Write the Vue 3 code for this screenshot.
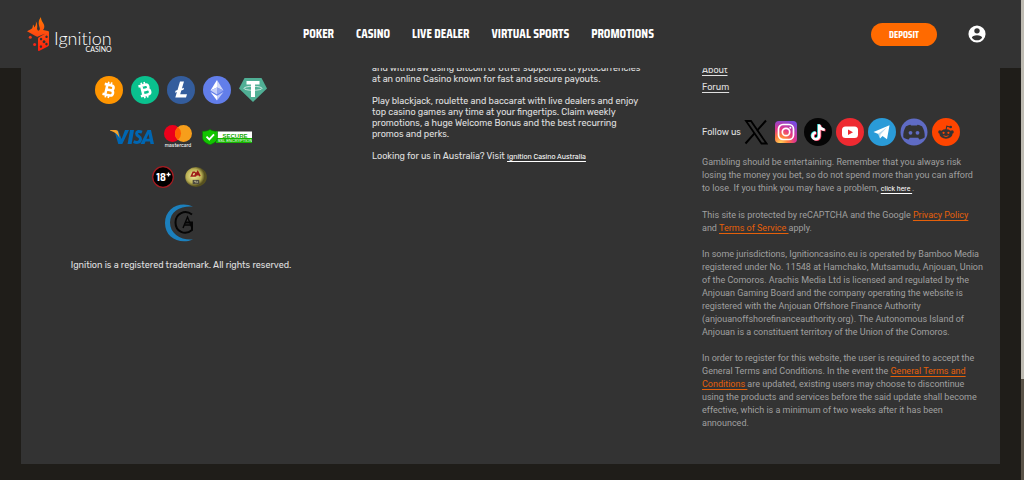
<template>
  <div class="page">
    <header class="header">
      <a href="#" class="brand" aria-label="Ignition Casino">
        <svg class="brand-mark" viewBox="0 0 22 34">
          <defs>
            <linearGradient id="flame" x1="0" y1="0" x2="0" y2="1">
              <stop offset="0" stop-color="#ff7a00" />
              <stop offset="0.5" stop-color="#ff4a10" />
              <stop offset="1" stop-color="#ff1d0c" />
            </linearGradient>
          </defs>
          <path
            fill="url(#flame)"
            fill-rule="evenodd"
            d="M14 0C13.600 4 17.300 6.500 17.300 9.500C17.300 11 16.800 12 16 13L21 14C22 14.300 22 15 22 16V27.500C22 28.500 21.500 29 20.800 29.400L12.500 33.700C11.500 34.200 11 34 11 33V22C11 21 11.500 20.500 12.300 20L18.500 16.400L11 19.500C10.300 19.800 9.700 19.700 9 19.300L0 14.200L4.300 12C5.800 11 5.700 9.500 6 7.500C7 8.500 7.200 9.500 7.200 10.500C8.800 9 9.300 6.500 8.800 4.500C10.300 6.500 10.500 9 10 11.500C10.200 13 11 14 12 13.500C14 12 11.800 9.500 11.700 6.500C11.600 3.500 12.800 1.500 14 0ZM17 23.300a1.400 1.500 0 1 0 .1 0ZM19.500 18.500a1.200 1.300 0 1 0 .1 0ZM14 20.800a1.200 1.300 0 1 0 .1 0ZM19.400 25.800a1.200 1.300 0 1 0 .1 0ZM13.900 28.300a1.200 1.300 0 1 0 .1 0Z"
          />
          <circle cx="3.300" cy="20.300" r="1.500" fill="#f23a18" />
          <circle cx="7.600" cy="27.500" r="1.500" fill="#f2281a" />
        </svg>
        <span class="brand-text">
          <span class="brand-name">Ignition</span>
          <span class="brand-sub">CASINO</span>
        </span>
      </a>
      <nav class="nav">
        <a v-for="item in menu" :key="item" href="#">{{ item }}</a>
      </nav>
      <div class="actions">
        <button type="button" class="deposit">DEPOSIT</button>
        <button type="button" class="account" aria-label="Account">
          <svg viewBox="0 0 20 20">
            <circle cx="10" cy="10" r="9.500" fill="#fff" />
            <circle cx="10" cy="6.500" r="3" fill="#333" />
            <path fill="#333" d="M10 11.400c3 0 5.700 1 5.700 2.700c-1.200 1.800-3.400 2.900-5.700 2.900s-4.500-1.100-5.700-2.900c0-1.700 2.700-2.700 5.700-2.700Z" />
          </svg>
        </button>
      </div>
    </header>

    <footer class="panel">
      <section class="payments">
        <div class="coins">
          <svg viewBox="0 0 28 28">
            <circle cx="14" cy="14" r="14" fill="#ff9500" />
            <g transform="rotate(13 14 14)" fill="none" stroke="#fff">
              <path stroke-width="2.600" d="M8.500 9H15.500a2.400 2.400 0 0 1 0 4.900H11H16a2.600 2.600 0 0 1 0 5.200H8.500M11.300 9V19" />
              <path stroke-width="1.700" d="M12 6V9M15 6V9M12 19V22M15 19V22" />
            </g>
          </svg>
          <svg viewBox="0 0 28 28">
            <circle cx="14" cy="14" r="14" fill="#0ac18e" />
            <g transform="rotate(-14 14 14)" fill="none" stroke="#fff">
              <path stroke-width="2.600" d="M8.500 9H15.500a2.400 2.400 0 0 1 0 4.900H11H16a2.600 2.600 0 0 1 0 5.200H8.500M11.300 9V19" />
              <path stroke-width="1.700" d="M12 6V9M15 6V9M12 19V22M15 19V22" />
            </g>
          </svg>
          <svg viewBox="0 0 28 28">
            <circle cx="14" cy="14" r="14" fill="#345d9d" />
            <path fill="#fff" d="M13 5.500H17L14.900 12.400L17 11.700L16.500 13.700L14.300 14.500L13.200 18.200H20L19 21.500H8.300L9.900 16.100L8 16.800L8.600 14.800L10.500 14Z" />
          </svg>
          <svg viewBox="0 0 28 28">
            <circle cx="14" cy="14" r="14" fill="#627eea" />
            <path fill="#fff" d="M14 4L7.500 14.500L14 11.500Z" />
            <path fill="#d0d8f9" d="M14 4L20.500 14.500L14 11.500Z" />
            <path fill="#c5cff8" d="M14 11.500L7.500 14.500L14 18.400Z" />
            <path fill="#8fa2f0" d="M14 11.500L20.500 14.500L14 18.400Z" />
            <path fill="#fff" d="M7.500 16L14 24.500V19.800Z" />
            <path fill="#c0cbf8" d="M20.500 16L14 24.500V19.800Z" />
          </svg>
          <svg viewBox="0 0 28 28">
            <path fill="#50af95" d="M5.500 2H22.500L28 12.500L14 26L0 12.500Z" />
            <path fill="#fff" d="M7.500 5H20.500V8.500H16V21H12V8.500H7.500Z" />
            <ellipse cx="14" cy="12.300" rx="9" ry="2" fill="none" stroke="#fff" stroke-width="0.700" />
          </svg>
        </div>

        <div class="cards">
          <svg class="visa" viewBox="0 0 44 16">
            <path fill="#0066b2" d="M5 4L8 1L11.600 10L15 1H19L12.300 15H8.300Z" />
            <path fill="#f7a32b" d="M0 1H5.500C7.500 1 8 2 8.300 3.500L9.600 9C7.500 5 4.500 3 0 1.500Z" />
            <path fill="#0066b2" d="M20 1H24L21.600 15H17.600Z" />
            <path fill="none" stroke="#0066b2" stroke-width="3" d="M32 3.200C29 2 26.700 2.300 26.600 4.600C26.500 7.400 30.700 7.200 30.500 10.200C30.300 13.300 27.500 14.200 23.600 12.600" />
            <path fill="#0066b2" fill-rule="evenodd" d="M37.500 1H41L44 15H40.500L40 12.500H35.500L34.500 15H30.500ZM38.500 5L36.500 9.700H39.500Z" />
          </svg>
          <svg class="mastercard" viewBox="0 0 28 23">
            <circle cx="8.500" cy="8.500" r="8.500" fill="#eb001b" />
            <circle cx="19.500" cy="8.500" r="8.500" fill="#f79e1b" />
            <path fill="#ff5f00" d="M14 2A8.500 8.500 0 0 1 14 15A8.500 8.500 0 0 1 14 2Z" />
            <text x="14" y="22" text-anchor="middle" fill="#fff" font-size="5">mastercard</text>
          </svg>
          <svg class="secure" viewBox="0 0 50 16">
            <path fill="#fff" d="M14 2.500H50V9H14Z" />
            <path fill="#16b800" d="M14 9H50V14H14Z" />
            <path fill="#12c400" stroke="#087800" stroke-width="0.600" d="M8 .4C10.500 2 13 2.200 15.500 2.300V8.500C15.500 12 12 14.500 8 15.700C4 14.500 .5 12 .5 8.500V2.300C3 2.200 5.500 2 8 .4Z" />
            <path fill="none" stroke="#fff" stroke-width="1.800" d="M4.500 7.600L7.300 10.400L12 5.300" />
            <text class="seal" x="33" y="8.500" text-anchor="middle" fill="#16a800" font-size="6" font-weight="700">SECURE</text>
            <text class="seal" x="33" y="13" text-anchor="middle" fill="#fff" font-size="4">SSL ENCRYPTION</text>
          </svg>
        </div>

        <div class="badges">
          <svg viewBox="0 0 22 22">
            <circle cx="11" cy="11" r="10.300" fill="#000" stroke="#a51c22" stroke-width="1.200" />
            <text class="age" x="9" y="15" text-anchor="middle" fill="#fff" font-size="12" font-weight="700">18</text>
            <path stroke="#fff" stroke-width="1.300" d="M14.500 8.500H18.500M16.500 6.500V10.500" />
          </svg>
          <svg viewBox="0 0 23 22">
            <defs>
              <radialGradient id="gold" cx="0.400" cy="0.450">
                <stop offset="0" stop-color="#f0eb9c" />
                <stop offset="0.700" stop-color="#b9af54" />
                <stop offset="1" stop-color="#57511f" />
              </radialGradient>
            </defs>
            <ellipse cx="11.500" cy="11" rx="11.300" ry="10.500" fill="url(#gold)" />
            <path fill="none" stroke="#9e1a18" stroke-width="1.600" d="M10.500 6H8.500L6.700 10H10.500L11.500 6L10.500 10M11 10L13.300 5.500L15.700 10M12 8.600H15" />
            <path fill="#4e4b3f" d="M8 14H15V18.500H8Z" />
            <path stroke="#b7b393" d="M9.500 15.500H11.500V17.500M13 15.500V17" fill="none" />
          </svg>
        </div>

        <svg class="regulator" viewBox="0 0 32 38">
          <path fill="#1c80bd" d="M28 2.500C15-3.500 0 4 0 19S15 41 28 35.500C16 36.500 5 30 5 18.500S16 1.500 28 2.500Z" />
          <g fill="none" stroke="#050505" stroke-width="2">
            <path d="M27 10.500C20 5 10.500 9.500 10.500 18.500S20 32 27 26V18.500H20" />
            <path stroke-width="1.400" d="M18 24L22.500 13L27 24M19.500 21H25.500" />
          </g>
        </svg>

        <p class="trademark">Ignition is a registered trademark. All rights reserved.</p>
      </section>

      <section class="about">
        <p>
          and withdraw using Bitcoin or other supported cryptocurrencies<br />
          at an online Casino known for fast and secure payouts.
        </p>
        <p>
          Play blackjack, roulette and baccarat with live dealers and enjoy<br />
          top casino games any time at your fingertips. Claim weekly<br />
          promotions, a huge Welcome Bonus and the best recurring<br />
          promos and perks.
        </p>
        <p>Looking for us in Australia? Visit <a href="#" class="small-link">Ignition Casino Australia</a></p>
      </section>

      <section class="legal">
        <ul class="links">
          <li><a href="#">About</a></li>
          <li><a href="#">Forum</a></li>
        </ul>

        <div class="social">
          <span class="social-label">Follow us</span>
          <a href="#" aria-label="X">
            <svg viewBox="0 0 28 28">
              <path fill="none" stroke="#000" stroke-width="1.800" d="M6 3H11L26.500 25.500H21.500Z" />
              <path stroke="#000" stroke-width="2" d="M26 2.500L17 12.600M14.500 15.400L5.500 25.500" />
            </svg>
          </a>
          <a href="#" aria-label="Instagram">
            <svg viewBox="0 0 28 28">
              <defs>
                <radialGradient id="insta" cx="0.250" cy="1" r="1.100">
                  <stop offset="0" stop-color="#ffd45c" />
                  <stop offset="0.300" stop-color="#ff7a3c" />
                  <stop offset="0.600" stop-color="#e0358c" />
                  <stop offset="1" stop-color="#7a4be0" />
                </radialGradient>
              </defs>
              <rect x="3" y="3" width="22" height="22" rx="4" fill="url(#insta)" />
              <g fill="none" stroke="#fff" stroke-width="1.700">
                <rect x="6.500" y="6.500" width="15" height="15" rx="4.500" />
                <circle cx="14" cy="14" r="3.700" />
              </g>
              <circle cx="18.300" cy="9.700" r="1" fill="#fff" />
            </svg>
          </a>
          <a href="#" aria-label="TikTok">
            <svg viewBox="0 0 28 28">
              <circle cx="14" cy="14" r="14" fill="#050505" />
              <g fill="none" stroke-width="2.600">
                <path stroke="#25d9d4" d="M14.500 6V17.500a3.300 3.300 0 1 1-3.300-3.300M14.500 6.500C15 9.500 17 11 20 11.200" />
                <path stroke="#fe2c55" d="M16 7V18.500a3.300 3.300 0 1 1-3.300-3.300M16 7.500C16.500 10.500 18.500 12 21.500 12.200" />
                <path stroke="#fff" d="M15.200 6.500V18a3.300 3.300 0 1 1-3.300-3.300M15.200 7C15.700 10 17.700 11.500 20.700 11.700" />
              </g>
            </svg>
          </a>
          <a href="#" aria-label="YouTube">
            <svg viewBox="0 0 28 28">
              <circle cx="14" cy="14" r="14" fill="#ee2a31" />
              <rect x="6" y="8.500" width="16" height="11.500" rx="3.500" fill="#fff" />
              <path fill="#ee2a31" d="M12 11.500L17 14.200L12 17Z" />
            </svg>
          </a>
          <a href="#" aria-label="Telegram">
            <svg viewBox="0 0 28 28">
              <circle cx="14" cy="14" r="14" fill="#2a9bd8" />
              <path fill="#fff" d="M5.500 14L21.500 7.200L19 21.300L14.500 18L12 20.500L11.500 16.500Z" />
              <path fill="#b8d9ed" d="M10 15.700L19 9.300L12.500 16.500L12 20.500Z" />
            </svg>
          </a>
          <a href="#" aria-label="Discord">
            <svg viewBox="0 0 28 28">
              <circle cx="14" cy="14" r="13.500" fill="#5f6bc4" />
              <path fill="#333" d="M11 7.500L10.500 6.700C8.500 7 7 7.700 6 8.300C4 11.500 3 15 3.300 19.300C5 20.700 6.800 21.400 8.700 21.600L9.800 19.700H18.200L19.300 21.600C21.200 21.400 23 20.700 24.700 19.300C25 15 24 11.500 22 8.300C21 7.700 19.500 7 17.500 6.700L17 7.500Z" />
              <circle cx="10.500" cy="14.800" r="1.900" fill="#5f6bc4" />
              <circle cx="17.500" cy="14.800" r="1.900" fill="#5f6bc4" />
            </svg>
          </a>
          <a href="#" aria-label="Reddit">
            <svg viewBox="0 0 28 28">
              <circle cx="14" cy="14" r="14" fill="#ff4500" />
              <path fill="none" stroke="#333" stroke-width="1.100" d="M14 12L14.800 8.200L18 9" />
              <circle cx="18.700" cy="9" r="1.300" fill="#333" />
              <circle cx="7.900" cy="14" r="1.700" fill="#333" />
              <circle cx="20.100" cy="14" r="1.700" fill="#333" />
              <ellipse cx="14" cy="16" rx="6.500" ry="4.700" fill="#333" />
              <circle cx="11.600" cy="14.800" r="1.100" fill="#ff4500" />
              <circle cx="16.400" cy="14.800" r="1.100" fill="#ff4500" />
              <path fill="none" stroke="#ff4500" stroke-width="0.900" d="M11.500 17.700Q14 19.400 16.500 17.700" />
            </svg>
          </a>
        </div>

        <div class="terms">
          <p>
            Gambling should be entertaining. Remember that you always risk<br />
            losing the money you bet, so do not spend more than you can afford<br />
            to lose. If you think you may have a problem, <a href="#" class="small-link">click here&nbsp;</a>.
          </p>
          <p>
            This site is protected by reCAPTCHA and the Google <a href="#" class="accent">Privacy Policy</a><br />
            and <a href="#" class="accent">Terms of Service&nbsp;</a>apply.
          </p>
          <p>
            In some jurisdictions, Ignitioncasino.eu is operated by Bamboo Media<br />
            registered under No. 11548 at Hamchako, Mutsamudu, Anjouan, Union<br />
            of the Comoros. Arachis Media Ltd is licensed and regulated by the<br />
            Anjouan Gaming Board and the company operating the website is<br />
            registered with the Anjouan Offshore Finance Authority<br />
            (anjouanoffshorefinanceauthority.org). The Autonomous Island of<br />
            Anjouan is a constituent territory of the Union of the Comoros.
          </p>
          <p>
            In order to register for this website, the user is required to accept the<br />
            General Terms and Conditions. In the event the <a href="#" class="accent">General Terms and<br />
            Conditions&nbsp;</a>are updated, existing users may choose to discontinue<br />
            using the products and services before the said update shall become<br />
            effective, which is a minimum of two weeks after it has been<br />
            announced.
          </p>
        </div>
      </section>
    </footer>

    <div class="scrollbar"><div class="thumb"></div></div>
  </div>
</template>

<script setup>
const menu = ['POKER', 'CASINO', 'LIVE DEALER', 'VIRTUAL SPORTS', 'PROMOTIONS']
</script>

<style>
body {
  background: #1f1d19;
}
</style>

<style scoped>
.page {
  box-sizing: border-box;
  min-height: 100vh;
  padding: 0 24px 17px 21px;
  background: #1f1d19;
  color: #e0e0e0;
  font-family: Rubik, Roboto, sans-serif;
  font-size: 9px;
  line-height: 11px;
}

a {
  color: inherit;
}

svg {
  display: block;
}

p {
  margin: 0;
  white-space: nowrap;
}

.header {
  position: fixed;
  top: 0;
  left: 0;
  right: 3px;
  z-index: 2;
  box-sizing: border-box;
  height: 68px;
  padding: 0 35px 0 27px;
  display: grid;
  grid-template-columns: 276px auto 1fr;
  align-items: center;
  background: #333;
}

.brand {
  display: flex;
  gap: 5px;
  color: #fff;
  text-decoration: none;
}

.brand-mark {
  width: 22px;
  height: 34px;
}

.brand-text {
  display: flex;
  flex-direction: column;
  align-items: flex-end;
  padding-top: 12px;
  font-family: Lato, sans-serif;
  font-variant-ligatures: none;
}

.brand-name {
  font-size: 18px;
  line-height: 18px;
  font-weight: 300;
}

.brand-sub {
  font-size: 7px;
  line-height: 5px;
}

.nav {
  display: flex;
  gap: 22px;
  font-family: "Saira Condensed", "Roboto Condensed", Roboto, sans-serif;
  font-size: 13px;
  line-height: 16px;
  font-weight: 700;
  white-space: nowrap;
}

.nav a {
  color: #fff;
  text-decoration: none;
}

.actions {
  display: flex;
  justify-content: flex-end;
  align-items: center;
  gap: 31px;
}

.deposit {
  width: 66px;
  height: 23px;
  padding: 0;
  border: 0;
  border-radius: 12px;
  background: #ff6a00;
  color: #fff;
  font-family: "Saira Condensed", "Roboto Condensed", Roboto, sans-serif;
  font-size: 10px;
  font-weight: 700;
}

.account {
  width: 18px;
  height: 18px;
  padding: 0;
  border: 0;
  background: none;
}

.panel {
  display: grid;
  grid-template-columns: repeat(3, minmax(0, 1fr));
  gap: 52px;
  padding: 0 20px 34px 21px;
  background: #333;
}

.payments {
  display: flex;
  flex-direction: column;
  align-items: center;
  padding-top: 76px;
}

.coins {
  display: flex;
  gap: 8px;
}

.coins svg {
  width: 28px;
  height: 28px;
}

.cards {
  display: flex;
  align-items: center;
  gap: 10px;
  margin-top: 21px;
}

.visa {
  width: 44px;
  height: 16px;
}

.mastercard {
  width: 28px;
  height: 23px;
}

.secure {
  width: 50px;
  height: 16px;
}

.seal {
  font-family: "Liberation Sans", sans-serif;
}

.badges {
  display: flex;
  gap: 11px;
  margin: 18px 3px 0 0;
}

.badges svg {
  width: 22px;
  height: 22px;
}

.age {
  font-family: "Saira Condensed", "Roboto Condensed", Roboto, sans-serif;
}

.regulator {
  width: 32px;
  height: 38px;
  margin-top: 16px;
}

.trademark {
  margin-top: 18px;
}

.about {
  padding-top: 63px;
}

.about p + p {
  margin-top: 11px;
}

.small-link {
  color: #fff;
  font-size: 7px;
  text-underline-offset: 2px;
}

.legal {
  padding-top: 62px;
}

.links {
  margin: 0;
  padding: 0;
  list-style: none;
  line-height: 17px;
}

.social {
  display: flex;
  align-items: center;
  margin: 22px 0 10px;
}

.social-label {
  width: 38px;
  white-space: nowrap;
}

.social a {
  margin-right: 4px;
}

.social svg {
  width: 28px;
  height: 28px;
}

.terms {
  color: #a0a0a0;
  font-family: Roboto, sans-serif;
  line-height: 13px;
}

.terms p + p {
  margin-top: 13px;
}

.legal a {
  text-underline-offset: 2px;
}

.accent {
  color: #e5600a;
}

.scrollbar {
  position: fixed;
  top: 0;
  right: 0;
  bottom: 0;
  z-index: 3;
  width: 3px;
  background: #595247;
}

.thumb {
  height: 79%;
  background: #bebbb2;
}
</style>
